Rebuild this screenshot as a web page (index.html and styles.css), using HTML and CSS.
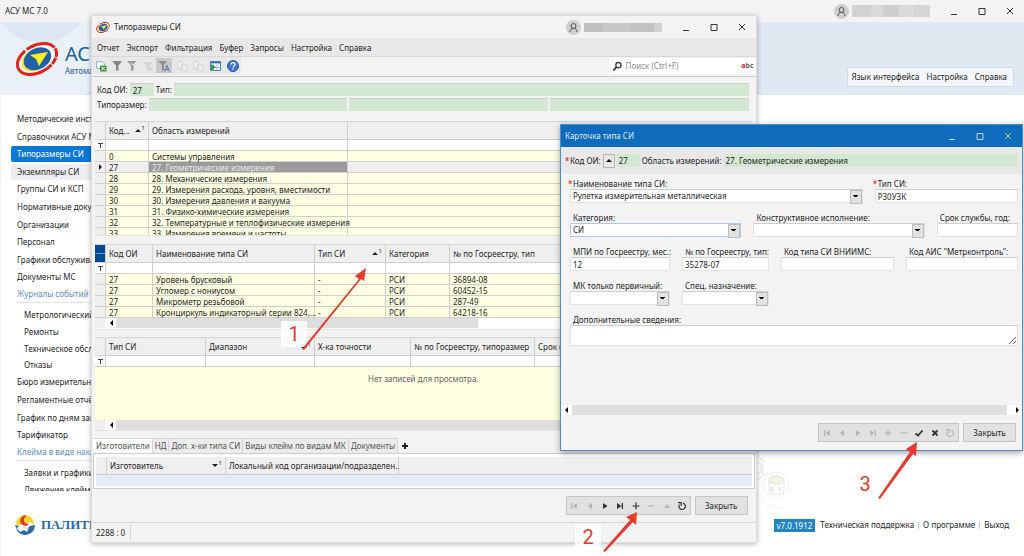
FILE: index.html
```html
<!DOCTYPE html>
<html lang="ru">
<head>
    <meta charset="UTF-8">
    <meta name="viewport" content="width=device-width, initial-scale=1.0">
    <title>АСУ МС 7.0</title>
    <link rel="stylesheet" href="styles.css">
</head>
<body>
    <!-- Shared icons -->
    <svg class="sprite" aria-hidden="true">
        <symbol id="logo" viewBox="0 0 44 38">
            <g transform="rotate(-28 22 19)">
                <ellipse cx="22" cy="19" rx="21" ry="13.500" fill="none" stroke="#e2231a" stroke-width="3" stroke-dasharray="8 1 7 1 58 2 30 1"/>
                <ellipse cx="22" cy="19" rx="18" ry="11.500" fill="#fff"/>
                <ellipse cx="21" cy="19" rx="15.500" ry="10.500" fill="#f6e51d"/>
                <ellipse cx="22.500" cy="19" rx="14.500" ry="10.500" fill="#2460a8"/>
            </g>
            <path d="M33 12L15 15l6 4 3 7z" fill="#fbee23"/>
        </symbol>
        <symbol id="user" viewBox="0 0 15 15">
            <circle cx="7.500" cy="7.500" r="7.500" fill="#cfcfcf"/>
            <circle cx="7.500" cy="6" r="2.500" fill="none" stroke="#555"/>
            <path d="M4 12c0-5 7-5 7 0" fill="none" stroke="#555"/>
        </symbol>
        <symbol id="min" viewBox="0 0 10 10"><path d="M2 8.500h6" stroke="currentColor"/></symbol>
        <symbol id="max" viewBox="0 0 10 10"><path d="M2 2.500h6v6H2z" fill="none" stroke="currentColor"/></symbol>
        <symbol id="close" viewBox="0 0 10 10"><path d="M2 2l6 6M8 2L2 8" stroke="currentColor"/></symbol>
        <symbol id="first" viewBox="0 0 10 10"><path d="M2 2h1.300v6H2zM8 2v6L3.500 5z" fill="currentColor"/></symbol>
        <symbol id="prev" viewBox="0 0 10 10"><path d="M7 2v6L2.500 5z" fill="currentColor"/></symbol>
        <symbol id="next" viewBox="0 0 10 10"><path d="M3 2v6l4.500-3z" fill="currentColor"/></symbol>
        <symbol id="last" viewBox="0 0 10 10"><path d="M8 2H6.700v6H8zM2 2v6l4.500-3z" fill="currentColor"/></symbol>
        <symbol id="plus" viewBox="0 0 10 10"><path d="M5 1.500v7M1.500 5h7" stroke="currentColor" stroke-width="1.200"/></symbol>
        <symbol id="minus" viewBox="0 0 10 10"><path d="M1.500 5h7" stroke="currentColor" stroke-width="1.200"/></symbol>
        <symbol id="up" viewBox="0 0 10 10"><path d="M2 7h6L5 3z" fill="currentColor"/></symbol>
        <symbol id="check" viewBox="0 0 10 10"><path d="M1.500 5.500l2.500 2 4.500-5" fill="none" stroke="currentColor" stroke-width="1.800"/></symbol>
        <symbol id="cross" viewBox="0 0 10 10"><path d="M2.500 2.500l5 5M7.500 2.500l-5 5" stroke="currentColor" stroke-width="1.800"/></symbol>
        <symbol id="reload" viewBox="0 0 10 10"><path d="M6 2.200A3.200 3.200 0 1 1 2.500 3.500M1 1.700h3.200v3.200" fill="none" stroke="currentColor" stroke-width="1.200"/></symbol>
        <symbol id="funnel" viewBox="0 0 12 12"><path d="M1 1h10L7.500 5.500V10L5 11V5.500z" fill="currentColor"/></symbol>
        <symbol id="pages" viewBox="0 0 12 12"><path d="M1.500 1.500h5v7h-5zM5.500 4.500h5v6h-5z" fill="#eee" stroke="currentColor"/></symbol>
    </svg>

    <div class="app">
        <header class="titlebar">
            <span class="title">АСУ МС 7.0</span>
            <svg class="user"><use href="#user"/></svg>
            <span class="masked"></span>
            <div class="controls">
                <button aria-label="Свернуть"><svg><use href="#min"/></svg></button>
                <button aria-label="Развернуть"><svg><use href="#max"/></svg></button>
                <button aria-label="Закрыть окно"><svg><use href="#close"/></svg></button>
            </div>
        </header>

        <div class="banner">
            <svg class="banner-logo"><use href="#logo"/></svg>
            <div class="brand">
                <h1>АСУ МС</h1>
                <p>Автоматизированная система</p>
            </div>
            <nav class="top-links">
                <a href="#">Язык интерфейса</a>
                <a href="#">Настройка</a>
                <a href="#">Справка</a>
            </nav>
        </div>

        <nav class="side">
            <ul class="list ten">
                <li><a href="#">Методические инструкции</a></li>
                <li><a href="#">Справочники АСУ МС</a></li>
                <li><a href="#" class="active">Типоразмеры СИ</a></li>
                <li><a href="#" class="hover">Экземпляры СИ</a></li>
                <li><a href="#">Группы СИ и КСП</a></li>
                <li><a href="#">Нормативные документы</a></li>
                <li><a href="#">Организации</a></li>
                <li><a href="#">Персонал</a></li>
                <li><a href="#">Графики обслуживания</a></li>
                <li><a href="#">Документы МС</a></li>
            </ul>
            <h2>Журналы событий</h2>
            <ul class="list sub">
                <li><a href="#">Метрологический контроль</a></li>
                <li><a href="#">Ремонты</a></li>
                <li><a href="#">Техническое обслуживание</a></li>
                <li><a href="#">Отказы</a></li>
            </ul>
            <ul class="list four">
                <li><a href="#">Бюро измерительной техники</a></li>
                <li><a href="#">Регламентные отчёты</a></li>
                <li><a href="#">График по дням занятости</a></li>
                <li><a href="#">Тарификатор</a></li>
            </ul>
            <h2>Клейма в виде наклеек</h2>
            <ul class="list sub last">
                <li><a href="#">Заявки и графики</a></li>
                <li><a href="#">Движение клейм</a></li>
            </ul>
        </nav>

        <svg class="sketch" viewBox="0 0 40 60" fill="none" aria-hidden="true">
            <path d="M6 4l8 4v16l-8 4M8 10l4 2v8l-4 2" stroke="#dde6ef"/>
            <circle cx="27" cy="33" r="13" stroke="#f0f2f4"/>
            <rect x="20" y="27" width="15" height="15" rx="3" stroke="#e2e6ea"/>
            <ellipse cx="27" cy="28" rx="7" ry="4" stroke="#d5dfd8" fill="#f5f5e4"/>
            <path d="M23 35v5M29 37h3" stroke="#f8dfe2" stroke-width="3"/>
            <path d="M8 42c6 9 14 14 26 15" stroke="#edf1f5"/>
        </svg>

        <footer class="foot">
            <svg class="foot-logo" viewBox="0 0 20 20">
                <path d="M1 9a9 9 0 0 1 18 0l-5-2-3 3-4-2-3 3z" fill="#fbd52c"/>
                <path d="M12 1a5 5 0 1 0 2 8A4 4 0 0 1 12 1z" fill="#e53328"/>
                <path d="M0 10l4 1-2 2 2 3 5-4 3 2 3-3 5-1A10 10 0 0 1 3 17z" fill="#2b6ba5"/>
                <path d="M4 15l5-3 3 2 2-1-2 4-3-2-4 2z" fill="#fff"/>
            </svg>
            <strong>ПАЛИТРА</strong>
            <div class="foot-links">
                <span class="version">v7.0.1912</span>
                <a href="#">Техническая поддержка</a><i></i>
                <a href="#">О программе</a><i></i>
                <a href="#">Выход</a>
            </div>
        </footer>
    </div>

    <!-- Window: type sizes -->
    <section class="window sizes">
        <header class="titlebar">
            <svg class="win-logo"><use href="#logo"/></svg>
            <span class="title">Типоразмеры СИ</span>
            <svg class="user"><use href="#user"/></svg>
            <span class="masked thin"></span>
            <div class="controls">
                <button aria-label="Свернуть"><svg><use href="#min"/></svg></button>
                <button aria-label="Развернуть"><svg><use href="#max"/></svg></button>
                <button aria-label="Закрыть окно"><svg><use href="#close"/></svg></button>
            </div>
        </header>
        <nav class="menu">
            <a href="#">Отчет</a>
            <a href="#">Экспорт</a>
            <a href="#">Фильтрация</a>
            <a href="#">Буфер</a>
            <a href="#">Запросы</a>
            <a href="#">Настройка</a>
            <a href="#">Справка</a>
        </nav>
        <div class="tools">
            <div class="tool-buttons">
                <button aria-label="Экспорт в Excel"><svg viewBox="0 0 12 12"><path d="M1.500 1.500h5l3 2v5h-8z" fill="#f8fbff" stroke="#9ab3cc"/><path d="M5 5.500h6.500v6H5z" fill="#3f9d3c"/><path d="M6.500 7l3.500 3M10 7l-3.500 3" stroke="#fff"/></svg></button>
                <button aria-label="Фильтр"><svg class="dark"><use href="#funnel"/></svg></button>
                <button aria-label="Изменить фильтр"><svg viewBox="0 0 12 12"><path d="M1 1h10L7.500 5.500V10L5 11V5.500z" fill="#999"/><path d="M5 3l2 2 4-4" fill="none" stroke="#eee"/></svg></button>
                <button aria-label="Сбросить фильтр"><svg viewBox="0 0 12 12"><path d="M2 2h8L7 6v4l-2 1V6z" fill="#d6d6d6"/><path d="M7 7l4 4M11 7l-4 4M1 2l9 7" stroke="#ccc"/></svg></button>
                <button class="pressed" aria-label="Автофильтр"><svg viewBox="0 0 12 12"><path d="M0 1h9L6 5v5l-2 1V5z" fill="#8f8f8f"/><path d="M6.500 11.500L9 5.500l2.500 6M7.500 9.500h3" fill="none" stroke="#4b79b5"/></svg></button>
                <button class="spaced" aria-label="Копировать"><svg class="faint"><use href="#pages"/></svg></button>
                <button aria-label="Вставить"><svg class="faint"><use href="#pages"/></svg></button>
                <button class="spaced" aria-label="Таблица"><svg viewBox="0 0 12 12"><path d="M1.500 1.500h10v9h-10z" fill="#fff" stroke="#4d83c4"/><path d="M1 2.500h11" stroke="#3f76ba" stroke-width="2"/><path d="M4.500 4v6M8 4v6M4 7.500h7" stroke="#9cbbdd"/><path d="M2 4l5 3-5 4z" fill="#37a037"/></svg></button>
                <button class="spaced" aria-label="Помощь"><svg viewBox="0 0 12 12"><circle cx="6" cy="6" r="5.500" fill="#3c74cf" stroke="#2455a6"/><path d="M4 4.500c0-2.500 4-2.500 4 0 0 1.500-2 1.500-2 3M6 8.500v1.300" fill="none" stroke="#fff" stroke-width="1.300"/></svg></button>
            </div>
            <div class="search">
                <svg viewBox="0 0 12 12"><circle cx="7" cy="4.500" r="2.800" fill="none" stroke="#444" stroke-width="1.500"/><path d="M5 6.500l-3.500 4" stroke="#444" stroke-width="2"/></svg>
                <input type="search" placeholder="Поиск (Ctrl+F)" aria-label="Поиск">
                <b><em>a</em>bc</b>
            </div>
        </div>

        <div class="filters">
            <div class="filter-row">
                <label for="f-code">Код ОИ:</label>
                <input id="f-code" class="code" value="27">
                <label for="f-type">Тип:</label>
                <input id="f-type">
            </div>
            <div class="filter-row">
                <label for="f-size">Типоразмер:</label>
                <input id="f-size">
                <input aria-label="Типоразмер 2">
                <input aria-label="Типоразмер 3">
            </div>
        </div>

        <div class="pane areas">
            <table>
                <colgroup><col class="w10"><col class="w43"><col class="w199"><col></colgroup>
                <thead>
                    <tr><th></th><th class="sort">Код...<sup>1</sup></th><th>Область измерений</th><th></th></tr>
                    <tr class="auto"><td class="mark-f"></td><td></td><td></td><td></td></tr>
                </thead>
                <tbody>
                    <tr><td></td><td>0</td><td>Системы управления</td><td></td></tr>
                    <tr class="current"><td class="mark-c"></td><td>27</td><td class="cell">27. Геометрические измерения</td><td></td></tr>
                    <tr><td></td><td>28</td><td>28. Механические измерения</td><td></td></tr>
                    <tr><td></td><td>29</td><td>29. Измерения расхода, уровня, вместимости</td><td></td></tr>
                    <tr><td></td><td>30</td><td>30. Измерения давления и вакуума</td><td></td></tr>
                    <tr><td></td><td>31</td><td>31. Физико-химические измерения</td><td></td></tr>
                    <tr><td></td><td>32</td><td>32. Температурные и теплофизические измерения</td><td></td></tr>
                    <tr><td></td><td>33</td><td>33. Измерения времени и частоты</td><td></td></tr>
                </tbody>
            </table>
        </div>

        <div class="pane types">
            <table>
                <colgroup><col class="w10"><col class="w47"><col class="w162"><col class="w71"><col class="w64"><col></colgroup>
                <thead>
                    <tr><th class="grip"></th><th>Код ОИ</th><th>Наименование типа СИ</th><th class="sort">Тип СИ<sup>1</sup></th><th>Категория</th><th>№ по Госреестру, тип</th></tr>
                    <tr class="auto"><td class="mark-f"></td><td></td><td></td><td></td><td></td><td></td></tr>
                </thead>
                <tbody>
                    <tr><td></td><td>27</td><td>Уровень брусковый</td><td>-</td><td>РСИ</td><td>36894-08</td></tr>
                    <tr><td></td><td>27</td><td>Угломер с нониусом</td><td>-</td><td>РСИ</td><td>60452-15</td></tr>
                    <tr><td></td><td>27</td><td>Микрометр резьбовой</td><td>-</td><td>РСИ</td><td>287-49</td></tr>
                    <tr><td></td><td>27</td><td>Кронциркуль индикаторный серии 824,...</td><td>-</td><td>РСИ</td><td>64218-16</td></tr>
                </tbody>
            </table>
            <div class="scroll"><span class="bar part"></span></div>
        </div>

        <div class="pane ranges">
            <table>
                <colgroup><col class="w10"><col class="w100"><col class="w109"><col class="w96"><col class="w124"><col></colgroup>
                <thead>
                    <tr><th></th><th>Тип СИ</th><th class="sort">Диапазон<sup>1</sup></th><th>Х-ка точности</th><th>№ по Госреестру, типоразмер</th><th>Срок службы</th></tr>
                    <tr class="auto"><td class="mark-f"></td><td></td><td></td><td></td><td></td><td></td></tr>
                </thead>
            </table>
            <p class="empty">Нет записей для просмотра.</p>
            <div class="scroll"><span class="bar"></span></div>
        </div>

        <div class="tabs" role="tablist">
            <button role="tab" class="on">Изготовители</button>
            <button role="tab">НД</button>
            <button role="tab">Доп. х-ки типа СИ</button>
            <button role="tab">Виды клейм по видам МК</button>
            <button role="tab">Документы</button>
            <button class="add" aria-label="Добавить вкладку"><svg viewBox="0 0 10 10"><path d="M5 2v6M2 5h6" stroke="#222" stroke-width="2"/></svg></button>
        </div>
        <div class="makers">
            <table>
                <colgroup><col class="w10"><col class="w119"><col class="w173"><col></colgroup>
                <thead>
                    <tr><th></th><th class="sort down">Изготовитель<sup>1</sup></th><th>Локальный код организации/подразделен...</th><th></th></tr>
                </thead>
                <tbody><tr><td colspan="4"></td></tr></tbody>
            </table>
        </div>

        <div class="actions">
            <div class="navigator">
                <button disabled aria-label="Первая"><svg><use href="#first"/></svg></button>
                <button disabled aria-label="Предыдущая"><svg><use href="#prev"/></svg></button>
                <button aria-label="Следующая"><svg><use href="#next"/></svg></button>
                <button aria-label="Последняя"><svg><use href="#last"/></svg></button>
                <button aria-label="Добавить"><svg><use href="#plus"/></svg></button>
                <button disabled aria-label="Удалить"><svg><use href="#minus"/></svg></button>
                <button disabled aria-label="Изменить"><svg><use href="#up"/></svg></button>
                <button aria-label="Обновить"><svg><use href="#reload"/></svg></button>
            </div>
            <button class="btn">Закрыть</button>
        </div>
        <div class="status"><span>2288 : 0</span></div>

        <!-- Step pointers -->
        <span class="step one">1</span>
        <svg class="arrow one" viewBox="0 0 64 82"><path d="M0 81L57 11l-4-3 11-8-2 13-3-2L2 82z"/></svg>
        <span class="step two">2</span>
        <svg class="arrow two" viewBox="0 0 34 40"><path d="M0 39L27 8l-4-3L34 0l-1 13-3-3L2 40z"/></svg>
    </section>

    <!-- Window: type card -->
    <section class="window card">
        <header class="titlebar">
            <span class="title">Карточка типа СИ</span>
            <div class="controls">
                <button aria-label="Свернуть"><svg><use href="#min"/></svg></button>
                <button aria-label="Развернуть"><svg><use href="#max"/></svg></button>
                <button aria-label="Закрыть окно"><svg><use href="#close"/></svg></button>
            </div>
        </header>
        <div class="card-top">
            <label for="c-code" class="req">Код ОИ:</label>
            <button class="pick" aria-label="Выбрать"></button>
            <input id="c-code" class="code" value="27">
            <label for="c-area">Область измерений:</label>
            <input id="c-area" value="27. Геометрические измерения">
        </div>
        <form class="fields">
            <div class="line l1">
                <div class="field">
                    <label for="c-name" class="req">Наименование типа СИ:</label>
                    <div class="combo"><select id="c-name"><option>Рулетка измерительная металлическая</option></select></div>
                </div>
                <div class="field">
                    <label for="c-type" class="req">Тип СИ:</label>
                    <input id="c-type" value="Р30УЗК">
                </div>
            </div>
            <div class="line l2">
                <div class="field">
                    <label for="c-cat">Категория:</label>
                    <div class="combo focus"><select id="c-cat"><option>СИ</option></select></div>
                </div>
                <div class="field">
                    <label for="c-con">Конструктивное исполнение:</label>
                    <div class="combo"><select id="c-con"><option></option></select></div>
                </div>
                <div class="field">
                    <label for="c-life">Срок службы, год:</label>
                    <input id="c-life">
                </div>
            </div>
            <div class="line l3">
                <div class="field">
                    <label for="c-mpi">МПИ по Госреестру, мес.:</label>
                    <input id="c-mpi" value="12">
                </div>
                <div class="field">
                    <label for="c-reg">№ по Госреестру, тип:</label>
                    <input id="c-reg" value="35278-07">
                </div>
                <div class="field">
                    <label for="c-vn">Код типа СИ ВНИИМС:</label>
                    <input id="c-vn">
                </div>
                <div class="field">
                    <label for="c-ais">Код АИС "Метрконтроль":</label>
                    <input id="c-ais">
                </div>
            </div>
            <div class="line l3">
                <div class="field">
                    <label for="c-mk">МК только первичный:</label>
                    <div class="combo"><select id="c-mk"><option></option></select></div>
                </div>
                <div class="field">
                    <label for="c-spec">Спец. назначение:</label>
                    <div class="combo"><select id="c-spec"><option></option></select></div>
                </div>
            </div>
            <div class="field">
                <label for="c-more">Дополнительные сведения:</label>
                <textarea id="c-more"></textarea>
            </div>
        </form>
        <div class="scroll wide"><span class="bar"></span></div>
        <div class="actions">
            <div class="navigator">
                <button disabled aria-label="Первая"><svg><use href="#first"/></svg></button>
                <button disabled aria-label="Предыдущая"><svg><use href="#prev"/></svg></button>
                <button disabled aria-label="Следующая"><svg><use href="#next"/></svg></button>
                <button disabled aria-label="Последняя"><svg><use href="#last"/></svg></button>
                <button disabled aria-label="Добавить"><svg><use href="#plus"/></svg></button>
                <button disabled aria-label="Удалить"><svg><use href="#minus"/></svg></button>
                <button aria-label="Сохранить"><svg><use href="#check"/></svg></button>
                <button aria-label="Отменить"><svg><use href="#cross"/></svg></button>
                <button disabled aria-label="Обновить"><svg><use href="#reload"/></svg></button>
            </div>
            <button class="btn">Закрыть</button>
        </div>

        <span class="step three">3</span>
        <svg class="arrow three" viewBox="0 0 40 57"><path d="M0 56L32 10l-4-3 11-7-1 14-3-2L2 57z"/></svg>
    </section>
</body>
</html>
```
FILE: styles.css
```css
* {
    margin: 0;
    padding: 0;
    box-sizing: border-box;
}

body {
    position: relative;
    min-height: 100vh;
    overflow: hidden;
    background: #fff;
    color: #262626;
    font: 8px/10px "Noto Sans", sans-serif;
}

button,
input,
select,
textarea {
    font: inherit;
    color: inherit;
    border: none;
    outline: none;
    border-radius: 0;
    background: none;
    min-width: 0;
}

a {
    color: inherit;
    text-decoration: none;
}

.sprite {
    position: absolute;
    width: 0;
    height: 0;
}

/* Main application */
.app {
    min-height: 100vh;
    display: flex;
    flex-direction: column;
    border-left: 1px solid #f0f0f0;
}

.titlebar {
    display: flex;
    align-items: center;
    height: 22px;
    background: #f3f3f3;
}

.titlebar .title {
    margin-left: 4px;
    margin-right: auto;
}

.user {
    width: 15px;
    height: 15px;
    margin-right: 3px;
}

.masked {
    width: 78px;
    height: 12px;
    margin-right: 10px;
    background: linear-gradient(90deg, #d3d3d3 25%, #dadada 25% 40%, #cfcfcf 40% 60%, #dadada 60% 80%, #d5d5d5 80%);
}

.masked.thin {
    height: 9px;
    background: linear-gradient(90deg, #bfbfbf 25%, #c8c8c8 25% 60%, #c2c2c2 60% 90%, #d0d0d0 90%);
}

.controls {
    display: flex;
    color: #333;
}

.controls button {
    width: 28px;
    height: 20px;
    display: flex;
    align-items: center;
    justify-content: center;
}

.controls svg,
.navigator svg,
.add svg {
    width: 10px;
    height: 10px;
}

.banner {
    display: flex;
    align-items: center;
    height: 73px;
    padding: 0 10px 0 14px;
    background: radial-gradient(circle at 40px -30px, #dde7f1 50px, #e9f0f7 51px 110px, #e0e8f1 111px);
}

.banner-logo {
    width: 44px;
    height: 38px;
    margin-right: 6px;
}

.brand {
    color: #1f5f9f;
    padding-top: 4px;
}

.brand h1 {
    font-size: 20px;
    line-height: 20px;
    font-weight: 400;
}

.brand p {
    line-height: 14px;
}

.top-links {
    display: flex;
    gap: 7px;
    margin: 37px 0 0 auto;
    padding: 4px 6px 4px 4px;
    background: #f3f7fb;
    border: 1px solid #c9dcef;
    border-radius: 2px;
}

/* Side menu */
.side {
    width: 200px;
    height: 380px;
    margin-top: 16px;
    padding-left: 10px;
    overflow: hidden;
}

.list {
    list-style: none;
    display: grid;
    grid-auto-rows: 1fr;
}

.list a {
    display: block;
    padding: 3px 6px;
    border-radius: 2px;
}

.list .active {
    background: #0a78d7;
    color: #fff;
}

.list .hover {
    background: #ededf2;
}

.ten {
    height: 176px;
}

.four {
    height: 71px;
}

.sub {
    height: 67px;
    margin-top: 4px;
    padding-left: 7px;
}

.sub.last {
    height: 34px;
}

.side h2 {
    margin-left: 6px;
    padding: 2px 0 3px;
    border-bottom: 1px solid #e4e4e4;
    font-size: 8px;
    font-weight: 400;
    color: #5b8fc4;
}

.sketch {
    position: absolute;
    left: 749px;
    top: 452px;
    width: 40px;
    height: 60px;
}

.foot {
    display: flex;
    align-items: center;
    margin-top: 24px;
    padding: 0 15px 0 14px;
}

.foot-logo {
    width: 20px;
    height: 20px;
    margin-right: 6px;
}

.foot strong {
    font: bold 13px/16px "Liberation Serif", serif;
    color: #2a6ca8;
}

.foot-links {
    display: flex;
    align-items: center;
    margin-left: auto;
}

.version {
    margin-right: 5px;
    padding: 2px 3px 1px;
    background: #2284c0;
    color: #fff;
}

.foot-links i {
    width: 1px;
    height: 7px;
    margin: 0 4px;
    background: #ccc;
}

/* Windows */
.window {
    position: absolute;
    background: #f3f3f3;
}

.sizes {
    left: 91px;
    top: 15px;
    width: 65%;
    border: 1px solid #dcdcdc;
    box-shadow: 0 1px 5px rgba(0, 0, 0, 0.3);
}

.win-logo {
    width: 14px;
    height: 13px;
    margin-left: 4px;
}

.menu {
    display: flex;
    gap: 7px;
    height: 19px;
    padding: 5px 5px 4px;
    background: #e8e8e8;
    border-bottom: 1px solid #d8d8d8;
}

.tools {
    display: flex;
    justify-content: space-between;
    height: 20px;
    border-bottom: 1px solid #c9c9c9;
}

.tool-buttons {
    display: flex;
    align-items: center;
    width: 149px;
    height: 17px;
    padding-left: 1px;
    background: #e8e8e8;
}

.tool-buttons button {
    width: 16px;
    height: 15px;
    display: flex;
    align-items: center;
    justify-content: center;
}

.tool-buttons .spaced {
    margin-left: 2px;
}

.tool-buttons .pressed {
    background: #c9c9c9;
}

.tool-buttons svg {
    width: 12px;
    height: 12px;
}

.dark {
    color: #888;
}

.faint {
    color: #d6d6d6;
}

.search {
    display: flex;
    align-items: center;
    width: 147px;
    height: 16px;
    margin-top: 1px;
    padding: 0 2px 0 3px;
    background: #fff;
}

.search svg {
    width: 11px;
    height: 11px;
    margin-right: 3px;
}

.search input {
    flex: 1;
}

.search input::placeholder {
    color: #8a8a8a;
}

.search b {
    font-size: 7px;
    color: #666;
}

.search em {
    font-style: normal;
    color: #d22;
}

.filters {
    display: grid;
    gap: 2px;
    padding: 6px 7px 10px 5px;
}

.filter-row {
    display: flex;
    align-items: center;
    gap: 2px;
}

.filter-row input {
    flex: 1;
    height: 13px;
    padding: 0 3px;
    background: #d3e8d3;
    border-top: 1px solid #c6d4c6;
}

.filter-row .code {
    flex: none;
    width: 24px;
}

/* Grids */
.pane {
    margin: 0 4px 0 3px;
    border-top: 1px solid #d6d6d0;
    border-bottom: 1px solid #e4e4e4;
    background: #ffffe1;
    overflow: hidden;
}

.areas {
    height: 115px;
}

.types {
    height: 86px;
    margin-top: 8px;
}

.ranges {
    height: 94px;
    margin-top: 7px;
}

table {
    width: 100%;
    table-layout: fixed;
    border-collapse: separate;
    border-spacing: 0;
}

.w10 { width: 11px; }
.w43 { width: 43px; }
.w47 { width: 47px; }
.w64 { width: 64px; }
.w71 { width: 71px; }
.w96 { width: 96px; }
.w100 { width: 100px; }
.w109 { width: 109px; }
.w119 { width: 119px; }
.w124 { width: 124px; }
.w162 { width: 162px; }
.w173 { width: 173px; }
.w199 { width: 199px; }

th,
td {
    height: 11px;
    padding: 0 0 0 3px;
    border-right: 1px solid #cfcfcf;
    border-bottom: 1px solid #cfcfcf;
    text-align: left;
    font-weight: 400;
    white-space: nowrap;
}

th {
    position: relative;
    height: 18px;
    background: #efefef;
}

th sup {
    position: absolute;
    right: 3px;
    top: 2px;
    font-size: 6px;
    line-height: 8px;
}

.sort::after {
    content: "";
    position: absolute;
    right: 7px;
    top: 7px;
    border: 3px solid transparent;
    border-top: none;
    border-bottom: 3px solid #222;
}

.sort.down::after {
    border-top: 3px solid #222;
    border-bottom: none;
}

td:first-child {
    background: #efefef;
    padding: 0;
}

td:last-child,
th:last-child {
    border-right: none;
}

tbody td {
    line-height: 9px;
}

.auto td,
.auto td:first-child {
    background: #fff;
}

.mark-f::before {
    content: "";
    display: block;
    width: 5px;
    height: 5px;
    margin-left: 3px;
    background: linear-gradient(#444, #444) 0 0 / 5px 1px no-repeat, linear-gradient(#444, #444) 2px 1px / 1px 4px no-repeat;
}

.mark-c::before {
    content: "";
    display: block;
    width: 0;
    margin-left: 4px;
    border: 3px solid transparent;
    border-left-color: #222;
    border-right: none;
}

.current td {
    background: #efefef;
}

.current .cell {
    background: #9b9b9b;
    color: #eee;
}

.grip {
    background: linear-gradient(#004a8f 46%, #6b9bcc 46% 54%, #004a8f 54%);
}

.scroll {
    position: relative;
    display: flex;
    height: 10px;
    padding-left: 21px;
    background: linear-gradient(90deg, #efefef 10px, #fff 10px);
}

.scroll::before,
.scroll.wide::after {
    content: "";
    position: absolute;
    left: 15px;
    top: 2px;
    border: 3px solid transparent;
    border-right-color: #000;
    border-left: none;
}

.bar {
    flex: 1;
    background: #dedede;
}

.bar.part {
    flex: none;
    width: 57%;
}

.empty {
    height: 53px;
    padding-top: 7px;
    text-align: center;
    color: #666;
}

/* Bottom tabs */
.tabs {
    display: flex;
    height: 15px;
    margin-top: 7px;
    padding-left: 1px;
}

.tabs button {
    padding: 0 2px;
    background: #ececec;
    border: 1px solid #d5d5d5;
    border-left: none;
    border-bottom: none;
    color: #555;
    white-space: nowrap;
}

.tabs .on {
    padding-left: 3px;
    background: #fff;
}

.tabs .add {
    background: none;
    border: none;
    display: flex;
    align-items: center;
}

.makers {
    height: 36px;
    margin: 0 1px;
    padding: 3px 2px;
    background: #fff;
    border: 1px solid #cdcdcd;
}

.makers tbody td {
    background: #e3edf9;
    border: none;
}

.actions {
    display: flex;
    justify-content: flex-end;
    align-items: center;
    gap: 4px;
}

.sizes .actions {
    height: 34px;
    padding-right: 8px;
    border-bottom: 1px solid #d8d8d8;
}

.navigator {
    display: flex;
    width: 125px;
    height: 19px;
    background: #e1e1e1;
    border: 1px solid #c6c6c6;
}

.card .navigator {
    width: 141px;
}

.navigator button {
    flex: 1;
    display: flex;
    align-items: center;
    justify-content: center;
    color: #333;
}

.navigator button:disabled {
    color: #b5b5b5;
}

.btn {
    width: 53px;
    height: 19px;
    background: #e1e1e1;
    border: 1px solid #c6c6c6;
}

.status {
    height: 19px;
    padding: 2px 0;
}

.status span {
    display: inline-block;
    padding: 3px 5px 2px 4px;
    border-right: 1px solid #d5d5d5;
}

/* Card window */
.card {
    left: 560px;
    right: 1px;
    top: 124px;
    border: 1px solid #4f8cc6;
    box-shadow: 0 2px 6px rgba(0, 0, 0, 0.35);
}

.card .titlebar {
    background: #0f6cbd;
    color: #dfeaf5;
}

.card .controls {
    color: #b9d3ea;
}

.card-top {
    display: flex;
    align-items: center;
    gap: 2px;
    height: 27px;
    padding: 0 4px 0 9px;
    background: #e8e8e8;
}

.card-top input {
    flex: 1;
    height: 13px;
    padding: 0 2px;
    background: #d3e8d3;
}

.card-top .code {
    flex: none;
    width: 23px;
}

.pick {
    position: relative;
    width: 12px;
    height: 14px;
    border: 1px solid #b5b5b5;
}

.pick::before {
    content: "";
    display: block;
    margin-left: 2px;
    width: 0;
    border: 3px solid transparent;
    border-top: none;
    border-bottom-color: #111;
}

.req {
    position: relative;
}

.req::before {
    content: "*";
    position: absolute;
    left: -5px;
    color: #e00;
}

.fields {
    display: grid;
    grid-template-columns: minmax(0, 1fr);
    gap: 9px;
    padding: 4px 4px 59px 9px;
}

.line {
    display: grid;
    gap: 12px;
}

.l1 {
    grid-template-columns: 292fr 143fr;
}

.l2 {
    grid-template-columns: 171fr 171fr 81fr;
}

.l3 {
    grid-template-columns: 100fr 87fr 113fr 112fr;
}

.field {
    display: flex;
    flex-direction: column;
    min-width: 0;
}

.field label {
    padding-left: 3px;
    line-height: 11px;
    white-space: nowrap;
}

.field .req::before {
    left: -2px;
}

.field input,
.combo,
textarea {
    height: 14px;
    padding: 0 2px;
    background: #fff;
    border: 1px solid #e2e2e2;
    border-top-color: #cfcfcf;
}

textarea {
    height: 21px;
    resize: vertical;
}

.combo {
    display: flex;
    position: relative;
    padding: 0;
}

.combo.focus {
    border-color: #a9cdf0;
}

.combo select {
    appearance: none;
    flex: 1;
    padding: 0 12px 0 2px;
}

.combo::after {
    content: "";
    position: absolute;
    right: 0;
    top: 0;
    width: 10px;
    height: 12px;
    background: linear-gradient(#111, #111) 2px 4px / 5px 1px no-repeat, linear-gradient(#111, #111) 3px 5px / 3px 1px no-repeat, #e1e1e1;
    border: 1px solid #bcbcbc;
    pointer-events: none;
}

.scroll.wide {
    padding: 0 15px 0 11px;
    background: #fff;
}

.scroll.wide::before {
    left: 4px;
}

.scroll.wide::after {
    left: auto;
    right: 3px;
    border: 3px solid transparent;
    border-left-color: #000;
    border-right: none;
}

.card .actions {
    height: 35px;
    padding-right: 6px;
}

/* Step pointers */
.step {
    position: absolute;
    width: 26px;
    height: 26px;
    font: 20px/26px Roboto, sans-serif;
    text-align: center;
    color: #e8392f;
    background: rgba(255, 255, 255, 0.8);
}

.arrow {
    position: absolute;
    fill: #e8392f;
}

.step.one {
    left: 189px;
    top: 305px;
}

.arrow.one {
    left: 210px;
    top: 252px;
    width: 64px;
    height: 82px;
}

.step.two {
    left: 483px;
    top: 508px;
}

.arrow.two {
    left: 511px;
    top: 496px;
    width: 34px;
    height: 40px;
}

.step.three {
    left: 291px;
    top: 346px;
    background: none;
}

.arrow.three {
    left: 317px;
    top: 317px;
    width: 40px;
    height: 57px;
}
```
